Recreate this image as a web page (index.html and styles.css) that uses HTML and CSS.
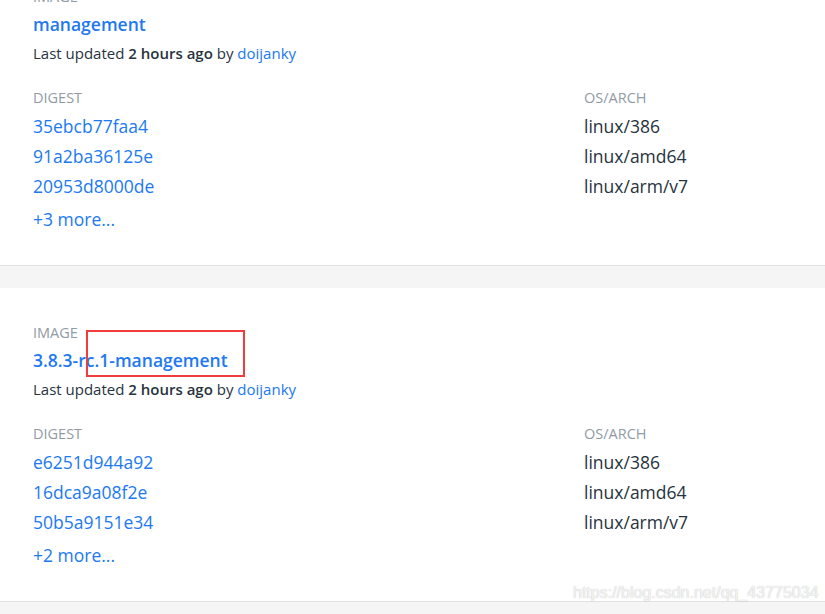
FILE: index.html
```html
<!DOCTYPE html>
<html lang="en">
<head>
  <meta charset="UTF-8">
  <title>Tags</title>
  <link rel="stylesheet" href="styles.css">
</head>
<body>
  <div class="tag-list">
    <div class="tag-card">
      <div class="label">IMAGE</div>
      <a class="tag-name">management</a>
      <p class="updated">Last updated <b>2 hours ago</b> by <a>doijanky</a></p>
      <div class="digest-table">
        <div class="label">DIGEST</div>
        <div class="label">OS/ARCH</div>
        <a class="digest">35ebcb77faa4</a><span class="arch">linux/386</span>
        <a class="digest">91a2ba36125e</a><span class="arch">linux/amd64</span>
        <a class="digest">20953d8000de</a><span class="arch">linux/arm/v7</span>
      </div>
      <a class="more">+3 more...</a>
    </div>

    <div class="tag-card">
      <div class="label">IMAGE</div>
      <a class="tag-name">3.8.3-rc.1-management</a>
      <p class="updated">Last updated <b>2 hours ago</b> by <a>doijanky</a></p>
      <div class="digest-table">
        <div class="label">DIGEST</div>
        <div class="label">OS/ARCH</div>
        <a class="digest">e6251d944a92</a><span class="arch">linux/386</span>
        <a class="digest">16dca9a08f2e</a><span class="arch">linux/amd64</span>
        <a class="digest">50b5a9151e34</a><span class="arch">linux/arm/v7</span>
      </div>
      <a class="more">+2 more...</a>
      <div class="mark"></div>
    </div>
  </div>
  <div class="watermark">https://blog.csdn.net/qq_43775034</div>
</body>
</html>
```

FILE: styles.css
```css
body {
  margin: 0;
  background-color: #f5f5f5;
  font-family: 'Open Sans', 'Noto Sans', sans-serif;
  color: #27333e;
  overflow: hidden;
}

a {
  color: #2179f2;
  text-decoration: none;
  cursor: pointer;
}

.tag-list {
  margin-top: -48px;
}

.tag-card {
  position: relative;
  background-color: #ffffff;
  border-bottom: 1px solid #dfe1e3;
  padding: 35px 33px 31px;
  margin-bottom: 22px;
}

.label {
  font-size: 14.5px;
  line-height: 20px;
  color: #8f9ba5;
  text-transform: uppercase;
}

.tag-name {
  display: block;
  margin-top: 4px;
  font-size: 17.5px;
  font-weight: 600;
  line-height: 26px;
}

.updated {
  margin: 6px 0 0;
  font-size: 15px;
  line-height: 20px;
}

.updated b {
  font-weight: 600;
}

.digest-table {
  display: grid;
  grid-template-columns: 551px 1fr;
  grid-template-rows: 23px repeat(3, 30px);
  margin-top: 25px;
  align-items: center;
}

.digest-table .label {
  align-self: start;
}

.digest, .arch {
  font-size: 17.5px;
  line-height: 30px;
}

.arch {
  color: #27333e;
}

.more {
  display: block;
  margin-top: 3px;
  font-size: 17.5px;
  line-height: 30px;
}

.mark {
  position: absolute;
  left: 86px;
  top: 42px;
  width: 155px;
  height: 43px;
  border: 2px solid #f23b3b;
}

.watermark {
  position: absolute;
  left: 573px;
  top: 584px;
  font-family: 'Liberation Sans', Arial, sans-serif;
  font-size: 16px;
  color: rgba(255, 255, 255, 0.85);
  text-shadow: 0 0 1px rgba(120, 120, 120, 0.6);
}
```
